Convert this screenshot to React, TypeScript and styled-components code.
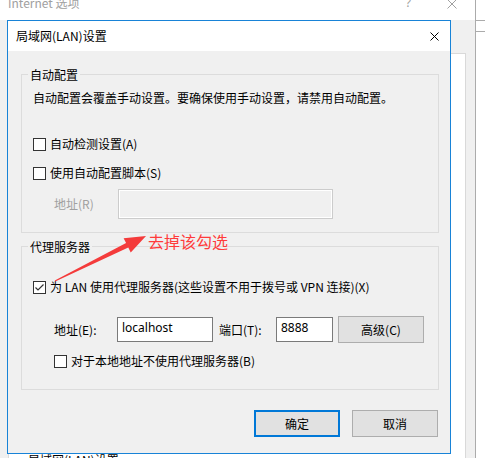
import React from "react";
import styled, { createGlobalStyle } from "styled-components";

const GlobalStyle = createGlobalStyle`
  html, body { margin: 0; padding: 0; }
  body {
    width: 485px;
    height: 458px;
    overflow: hidden;
    background: #fff;
    font-family: "Noto Sans CJK SC", "Noto Sans", sans-serif;
    font-size: 12px;
    color: #000;
  }
`;

const Page = styled.div`
  position: relative;
  width: 485px;
  height: 458px;
  display: flex;
  overflow: hidden;
`;

const ParentWindow = styled.div`
  width: 476px;
  flex: none;
  display: flex;
  flex-direction: column;
  border-right: 1px solid #ababab;
  box-sizing: border-box;
`;

const ParentTitleBar = styled.div`
  height: 20px;
  flex: none;
  display: flex;
  align-items: flex-start;
  background: #fff;
  color: #a0a0a0;
`;

const ParentTitle = styled.span`
  flex: 1;
  margin: -5px 0 0 8px;
  line-height: 16px;
`;

const ParentHelp = styled.span`
  margin-top: -5px;
  line-height: 16px;
  font-family: "Noto Sans", sans-serif;
`;

const CaptionIcon = styled.svg<{ $mr: number; $mt: number; $ml?: number }>`
  flex: none;
  margin: ${(p) => p.$mt}px ${(p) => p.$mr}px 0 ${(p) => p.$ml ?? 0}px;
`;

const ParentBody = styled.div`
  flex: 1;
  display: flex;
  background: #f0f0f0;
  padding: 33px 9px 0 8px;
`;

const TabPanel = styled.div`
  flex: 1;
  background: #fff;
  border: 1px solid #d9d9d9;
  border-bottom: none;
  padding: 398px 0 0 19px;
  line-height: 16px;
`;

const RightStrip = styled.div`
  flex: 1;
  padding-top: 20px;
  background: #fff;
`;

const StripLines = styled.div`
  height: 10px;
  border-top: 1px solid #ababab;
  border-bottom: 1px solid #ababab;
`;

const Dialog = styled.div`
  position: absolute;
  left: 7px;
  top: 20px;
  width: 444px;
  height: 434px;
  box-sizing: border-box;
  border: 1px solid #1883d7;
  background: #f0f0f0;
  display: flex;
  flex-direction: column;
`;

const DialogTitleBar = styled.div`
  height: 30px;
  flex: none;
  display: flex;
  align-items: center;
  background: #fff;
  padding-left: 8px;
`;

const DialogTitle = styled.span`
  flex: 1;
  line-height: 16px;
`;

const DialogBody = styled.div`
  flex: 1;
  display: flex;
  flex-direction: column;
  padding: 23px 11px 0 13px;
`;

const GroupBox = styled.div<{ $mt: number; $pb: number }>`
  display: flex;
  flex-direction: column;
  border: 1px solid #dcdcdc;
  margin-top: ${(p) => p.$mt}px;
  padding-bottom: ${(p) => p.$pb}px;
`;

const GroupTitle = styled.span`
  align-self: flex-start;
  margin: -8px 0 0 6px;
  padding: 0 2px;
  line-height: 16px;
  background: #f0f0f0;
`;

const Description = styled.div`
  margin: 7px 0 0 11px;
  line-height: 16px;
`;

const CheckRow = styled.label<{ $mt: number; $ml: number }>`
  display: flex;
  align-items: center;
  gap: 4px;
  height: 16px;
  margin: ${(p) => p.$mt}px 0 0 ${(p) => p.$ml}px;
  line-height: 16px;
`;

const Box = styled.span`
  width: 13px;
  height: 13px;
  box-sizing: border-box;
  border: 1px solid #333;
  background: #fff;
  display: flex;
  align-items: center;
  justify-content: center;
  flex: none;
`;

const FieldRow = styled.div<{ $mt: number }>`
  display: flex;
  align-items: center;
  margin-top: ${(p) => p.$mt}px;
  padding-left: 32px;
  line-height: 16px;
`;

const FieldLabel = styled.span<{ $w: number; $disabled?: boolean; $ml?: number }>`
  width: ${(p) => p.$w}px;
  margin-left: ${(p) => p.$ml ?? 0}px;
  flex: none;
  color: ${(p) => (p.$disabled ? "#a0a0a0" : "#000")};
`;

const TextBox = styled.div<{ $w: number; $h: number; $disabled?: boolean }>`
  width: ${(p) => p.$w}px;
  height: ${(p) => p.$h}px;
  box-sizing: border-box;
  flex: none;
  border: 1px solid ${(p) => (p.$disabled ? "#cccccc" : "#7a7a7a")};
  background: ${(p) => (p.$disabled ? "#f0f0f0" : "#fff")};
  box-shadow: ${(p) => (p.$disabled ? "inset 0 0 0 1px #fff" : "none")};
  padding: 2px 0 0 4px;
  font-family: "Noto Sans", "Noto Sans CJK SC", sans-serif;
  font-size: 12px;
  line-height: 16px;
`;

const Button = styled.div<{ $primary?: boolean; $ml?: number }>`
  width: ${(p) => (p.$primary ? 86 : 86)}px;
  height: 27px;
  box-sizing: border-box;
  flex: none;
  margin-left: ${(p) => p.$ml ?? 0}px;
  display: flex;
  align-items: center;
  justify-content: center;
  background: #e1e1e1;
  border: ${(p) => (p.$primary ? "2px solid #0078d7" : "1px solid #adadad")};
  line-height: 16px;
`;

const ButtonRow = styled.div`
  display: flex;
  justify-content: flex-end;
  gap: 12px;
  margin: 20px 1px 0 0;
`;

const AnnotationLayer = styled.svg`
  position: absolute;
  left: 0;
  top: 0;
  width: 485px;
  height: 458px;
  pointer-events: none;
`;

const AnnotationText = styled.span`
  position: absolute;
  left: 148px;
  top: 231px;
  font-size: 16px;
  line-height: 20px;
  color: #ff3b3b;
`;

const Cross = ({ color, size, mr, mt, ml }: { color: string; size: number; mr: number; mt: number; ml?: number }) => (
  <CaptionIcon $mr={mr} $mt={mt} $ml={ml} width={size} height={size} viewBox={`0 0 ${size} ${size}`}>
    <path d={`M0.5 0.5 L${size - 0.5} ${size - 0.5} M${size - 0.5} 0.5 L0.5 ${size - 0.5}`} stroke={color} strokeWidth="1" fill="none" />
  </CaptionIcon>
);

const CheckBox = ({ checked }: { checked?: boolean }) => (
  <Box>
    {checked && (
      <svg width="11" height="11" viewBox="0 0 11 11">
        <path d="M1.5 5.5 L4 8 L9.5 2.5" stroke="#333" strokeWidth="1.2" fill="none" />
      </svg>
    )}
  </Box>
);

export default function App() {
  return (
    <>
      <GlobalStyle />
      <Page>
        <ParentWindow>
          <ParentTitleBar>
            <ParentTitle>Internet 选项</ParentTitle>
            <ParentHelp>?</ParentHelp>
            <Cross color="#a0a0a0" size={10} mr={18} mt={-1} ml={36} />
          </ParentTitleBar>
          <ParentBody>
            <TabPanel>局域网(LAN)设置</TabPanel>
          </ParentBody>
        </ParentWindow>
        <RightStrip>
          <StripLines />
        </RightStrip>

        <Dialog>
          <DialogTitleBar>
            <DialogTitle>局域网(LAN)设置</DialogTitle>
            <Cross color="#000" size={9} mr={11} mt={0} />
          </DialogTitleBar>
          <DialogBody>
            <GroupBox $mt={0} $pb={13}>
              <GroupTitle>自动配置</GroupTitle>
              <Description>自动配置会覆盖手动设置。要确保使用手动设置，请禁用自动配置。</Description>
              <CheckRow $mt={30} $ml={11}>
                <CheckBox />
                自动检测设置(A)
              </CheckRow>
              <CheckRow $mt={13} $ml={11}>
                <CheckBox />
                使用自动配置脚本(S)
              </CheckRow>
              <FieldRow $mt={8}>
                <FieldLabel $w={64} $disabled>地址(R)</FieldLabel>
                <TextBox $w={215} $h={30} $disabled />
              </FieldRow>
            </GroupBox>

            <GroupBox $mt={13} $pb={20}>
              <GroupTitle>代理服务器</GroupTitle>
              <CheckRow $mt={24} $ml={11}>
                <CheckBox checked />
                为 LAN 使用代理服务器(这些设置不用于拨号或 VPN 连接)(X)
              </CheckRow>
              <FieldRow $mt={21}>
                <FieldLabel $w={63}>地址(E):</FieldLabel>
                <TextBox $w={96} $h={25}>localhost</TextBox>
                <FieldLabel $w={57} $ml={6}>端口(T):</FieldLabel>
                <TextBox $w={57} $h={25}>8888</TextBox>
                <Button $ml={5}>高级(C)</Button>
              </FieldRow>
              <CheckRow $mt={10} $ml={32}>
                <CheckBox />
                对于本地地址不使用代理服务器(B)
              </CheckRow>
            </GroupBox>

            <ButtonRow>
              <Button $primary>确定</Button>
              <Button>取消</Button>
            </ButtonRow>
          </DialogBody>
        </Dialog>

        <AnnotationLayer viewBox="0 0 485 458">
          <polygon
            points="55.22,281.45 128.28,247.55 130.72,252.48 146,236 123.62,238.14 126.06,243.07 54.78,280.55"
            fill="#f43b3b"
          />
        </AnnotationLayer>
        <AnnotationText>去掉该勾选</AnnotationText>
      </Page>
    </>
  );
}
